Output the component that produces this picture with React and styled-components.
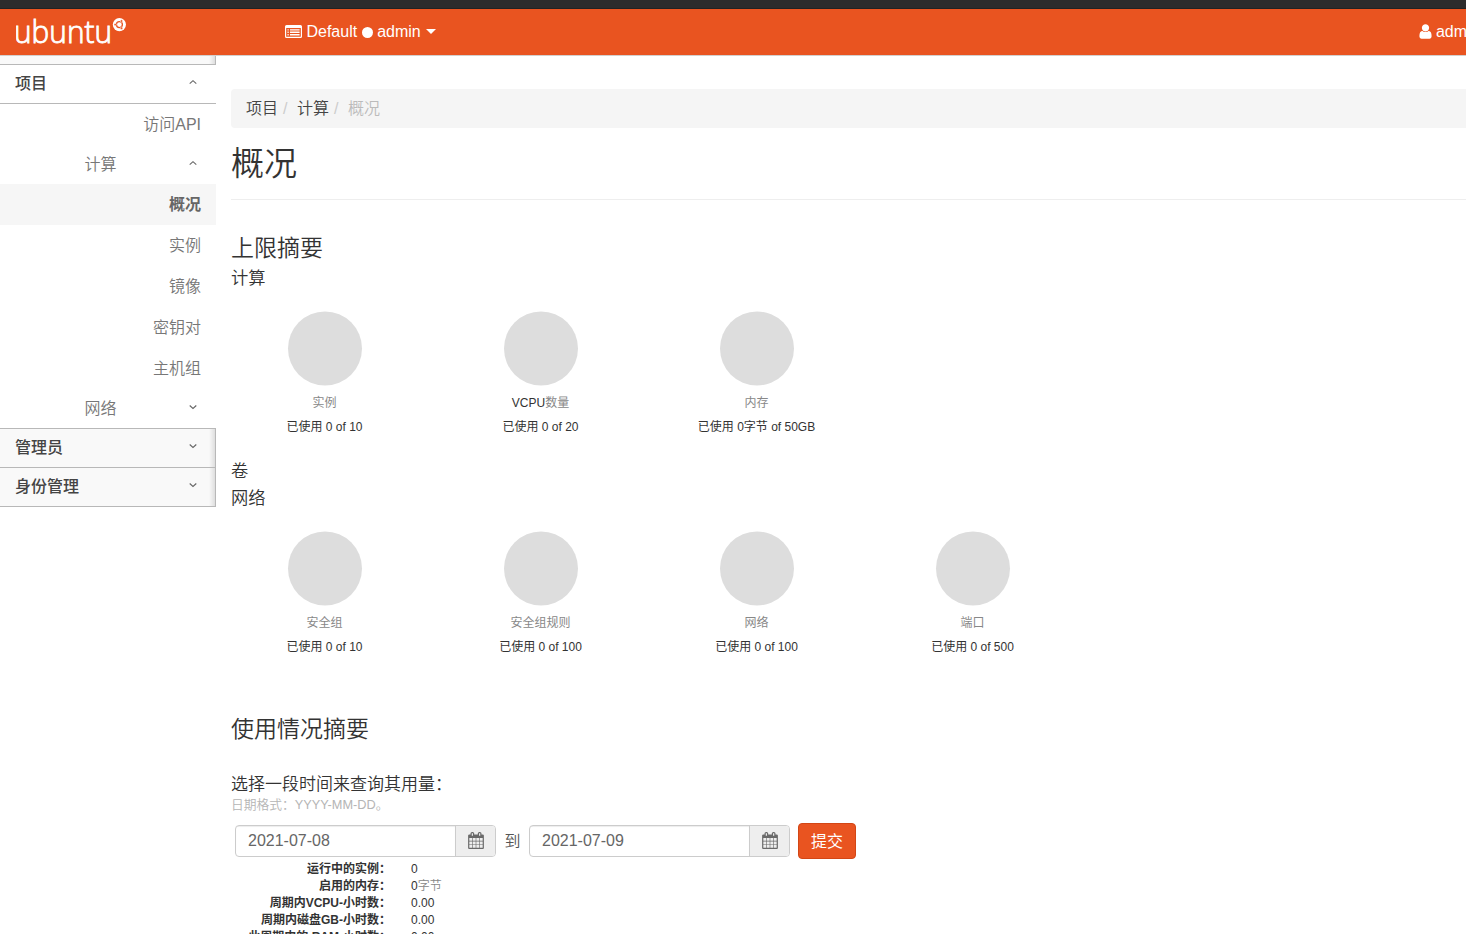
import React from 'react';
import styled, { createGlobalStyle } from 'styled-components';

const GlobalStyle = createGlobalStyle`
  * { box-sizing: border-box; }
  html, body { margin: 0; height: 100%; overflow: hidden; background: #fff; }
  body {
    font-family: "Liberation Sans", "Noto Sans CJK SC", sans-serif;
    font-size: 16px;
    font-weight: 350;
    color: #333;
  }
  h1, h2, h3, h4, p, dl, dd, dt, ul, ol { margin: 0; padding: 0; font-weight: 350; }
`;

const Page = styled.div`
  height: 934px;
  overflow: hidden;
`;

const WindowEdge = styled.div`
  height: 9px;
  background: #2c2c2c;
  border-bottom: 1px solid #222;
`;

const Navbar = styled.header`
  display: flex;
  align-items: center;
  height: 47px;
  padding-left: 16px;
  background: #e95420;
  border-bottom: 1px solid #d3cfcd;
  color: #fff;
  white-space: nowrap;
`;

const Brand = styled.a`
  display: flex;
  width: 269px;
  height: 46px;
`;

const NavItem = styled.a`
  display: flex;
  align-items: center;
  height: 46px;
  padding-bottom: 1px;
  line-height: 20px;
`;

const UserItem = styled(NavItem)`
  margin-left: auto;
  margin-right: -13.5px;
  gap: 4px;
`;

const Dot = styled.span`
  width: 11px;
  height: 11px;
  margin: 2px 4px 0 5px;
  border-radius: 50%;
  background: #fff;
`;

const Caret = styled.span`
  margin-left: 5px;
  border: 5px solid transparent;
  border-top-color: #fff;
  border-bottom-width: 0;
`;

const Body = styled.div`
  display: flex;
  height: 878px;
`;

const Sidebar = styled.nav`
  flex: 0 0 216px;
  color: #777;
`;

const SidebarCap = styled.div`
  height: 9px;
  background: linear-gradient(to left, #dedede, #f9f9f9 6px);
  border: solid #b8b8b8;
  border-width: 0 1px 1px 0;
`;

const Panel = styled.a`
  display: flex;
  align-items: center;
  justify-content: space-between;
  height: 39px;
  padding: 0 18px 4px 15px;
  border-bottom: 1px solid #b8b8b8;
  font-weight: 500;
  color: #444;
  ${(p) => !p.$open && `
    background: linear-gradient(to left, #dedede, #f9f9f9 6px);
    border-right: 1px solid #b8b8b8;
    padding-right: 17px;
  `}
`;

const Group = styled.a`
  display: flex;
  align-items: center;
  justify-content: space-between;
  height: 39px;
  padding: 0 18px 3px 84.5px;
`;

const Leaf = styled.a`
  display: flex;
  align-items: center;
  justify-content: flex-end;
  height: 41px;
  padding: 0 15px 3px 0;
  ${(p) => p.$active && 'background: #f6f6f6; font-weight: 700; color: #666;'}
`;

const SubTree = styled.div`
  border-bottom: 1px solid #b8b8b8;
  height: 325px;
`;

const Main = styled.main`
  flex: 1;
  min-width: 0;
  padding: 33px 0 0 15px;
`;

const Breadcrumb = styled.ol`
  display: flex;
  align-items: center;
  height: 39px;
  padding: 0 0 3px 15px;
  background: #f5f5f5;
  border-radius: 4px 0 0 4px;
  list-style: none;
`;

const Crumb = styled.li`
  color: ${(p) => (p.$current ? '#bbb' : '#444')};
  li + &::before {
    content: "/";
    padding: 0 9.5px 0 5px;
    color: #ccc;
  }
`;

const Title = styled.h1`
  height: 72px;
  padding-top: 1px;
  line-height: 70px;
  border-bottom: 1px solid #eee;
  font-size: 33px;
`;

const SectionTitle = styled.h2`
  margin-top: ${(p) => p.$top}px;
  font-size: 23px;
  line-height: 28px;
`;

const SubTitle = styled.h3`
  margin-top: ${(p) => p.$top || 0}px;
  font-size: 17.25px;
  line-height: 27px;
`;

const FormTitle = styled(SubTitle)`
  font-size: 17px;
`;

const Quotas = styled.div`
  display: flex;
  height: ${(p) => p.$height}px;
  margin-left: -15px;
  padding-top: 19px;
`;

const Quota = styled.div`
  flex: 0 0 216px;
  display: flex;
  flex-direction: column;
  align-items: center;
  padding-left: 1px;
  font-size: 12px;
  font-weight: 400;
  line-height: 24px;
`;

const Pie = styled.svg`
  width: 76px;
  height: 76px;
  margin-bottom: 3.5px;
  fill: #ddd;
`;

const Muted = styled.span`
  color: #888;
`;

const Hint = styled.p`
  font-size: 12.75px;
  line-height: 14px;
  color: #b5b5b5;
`;

const Form = styled.form`
  display: flex;
  align-items: center;
  height: 36px;
  margin: 11px 0 2px;
  padding-left: 4px;
`;

const DateField = styled.div`
  display: flex;
  width: 261px;
  height: 32px;
  border: 1px solid #ccc;
  border-radius: 4px;
  overflow: hidden;
  color: #666;
`;

const DateValue = styled.span`
  flex: 1;
  padding-left: 12px;
  line-height: 30px;
  box-shadow: inset 0 1px 1px rgba(0, 0, 0, 0.075);
`;

const Addon = styled.span`
  display: flex;
  align-items: center;
  justify-content: center;
  width: 40px;
  padding: 0 0 1px;
  background: #eee;
  border-left: 1px solid #ccc;
`;

const To = styled.span`
  width: 33px;
  padding-bottom: 3px;
  text-align: center;
  color: #555;
`;

const Submit = styled.button`
  width: 58px;
  height: 36px;
  margin-left: 8px;
  padding: 0 0 3px;
  border: 1px solid #d34615;
  border-radius: 4px;
  background: #e95420;
  color: #fff;
  font: inherit;
  font-weight: 400;
`;

const Stats = styled.dl`
  display: grid;
  grid-template-columns: 160px 1fr;
  column-gap: 20px;
  font-size: 12px;
  line-height: 17px;
  grid-auto-rows: 17px;
`;

const Term = styled.dt`
  && { font-weight: 700; }
  text-align: right;
  white-space: nowrap;
`;

const Logo = () => (
  <svg width="114" height="46" viewBox="0 0 114 46">
    <text x="-2" y="33.8" fontSize="32" fontWeight="300" fontFamily="'Open Sans', 'Noto Sans', sans-serif" fill="#fff" stroke="#fff" strokeWidth="0.9" textLength="98" lengthAdjust="spacingAndGlyphs">ubuntu</text>
    <circle cx="103.4" cy="15.6" r="6.6" fill="#fff" />
    <circle cx="103.4" cy="15.6" r="3" fill="none" stroke="#e95420" strokeWidth="1.3" />
    <g fill="#e95420" stroke="#fff" strokeWidth="0.5">
      <circle cx="99.2" cy="15.6" r="1.2" />
      <circle cx="105.5" cy="12" r="1.2" />
      <circle cx="105.5" cy="19.2" r="1.2" />
    </g>
  </svg>
);

const ListIcon = () => (
  <svg width="17" height="14" viewBox="0 0 17 14" fill="#fff" fillRule="evenodd">
    <path d="M1.500 0h14a1.500 1.500 0 0 1 1.500 1.500v10a1.500 1.500 0 0 1-1.500 1.500h-14A1.500 1.500 0 0 1 0 11.500v-10A1.500 1.500 0 0 1 1.500 0zM1.200 3.100v8.300q0 .4.4.4h13.800q.4 0 .4-.4V3.100z" />
    <path d="M2.500 4.200h1.200v1.300H2.500zM2.500 6.600h1.200v1.300H2.500zM2.500 9.100h1.200v1.300H2.500zM5 4.200h9.600v1.300H5zM5 6.600h9.600v1.300H5zM5 9.100h9.600v1.300H5z" />
  </svg>
);

const UserIcon = () => (
  <svg width="13" height="17" viewBox="0 0 1280 1792" fill="#fff">
    <path d="M1280 1399q0 109-62.5 187t-150.5 78h-854q-88 0-150.5-78t-62.5-187q0-85 8.5-160.5t31.5-152 58.500-131 94-89 134.500-34.500q131 128 313 128t313-128q76 0 134.500 34.500t94 89 58.500 131 31.500 152 8.500 160.500zm-256-887q0 159-112.500 271.500t-271.500 112.500-271.500-112.500-112.500-271.500 112.500-271.500 271.500-112.500 271.500 112.500 112.500 271.500z" />
  </svg>
);

const CalendarIcon = () => (
  <svg width="16" height="17" viewBox="0 0 1664 1792" fill="#6a6a6a">
    <path d="M128 1664h288v-288h-288v288zm352 0h320v-288h-320v288zm-352-352h288v-320h-288v320zm352 0h320v-320h-320v320zm-352-384h288v-288h-288v288zm736 736h320v-288h-320v288zm-384-736h320v-288h-320v288zm768 736h288v-288h-288v288zm-384-352h320v-320h-320v320zm-352-864v-288q0-13-9.500-22.500t-22.500-9.500h-64q-13 0-22.500 9.500t-9.500 22.500v288q0 13 9.500 22.500t22.500 9.500h64q13 0 22.500-9.500t9.500-22.500zm736 864h288v-320h-288v320zm-384-384h320v-288h-320v288zm384 0h288v-288h-288v288zm32-480v-288q0-13-9.500-22.500t-22.500-9.500h-64q-13 0-22.500 9.500t-9.500 22.500v288q0 13 9.500 22.500t22.500 9.500h64q13 0 22.500-9.500t9.500-22.500zm384-64v1280q0 52-38 90t-90 38h-1408q-52 0-90-38t-38-90v-1280q0-52 38-90t90-38h128v-96q0-66 47-113t113-47h64q66 0 113 47t47 113v96h384v-96q0-66 47-113t113-47h64q66 0 113 47t47 113v96h128q52 0 90 38t38 90z" />
    <path d="M128 384h1408v230H128z" />
  </svg>
);

const Chevron = ({ up }) => (
  <svg width="10" height="10" viewBox="0 0 10 10" fill="none" stroke="#666" strokeWidth="1.1">
    <path d={up ? 'M1.700 6.700L5 3.700L8.300 6.700' : 'M1.700 3.500L5 6.500L8.300 3.500'} />
  </svg>
);

const compute = [
  { name: '实例', used: '已使用 0 of 10' },
  { prefix: 'VCPU', name: '数量', used: '已使用 0 of 20' },
  { name: '内存', used: '已使用 0字节 of 50GB' },
];

const network = [
  { name: '安全组', used: '已使用 0 of 10' },
  { name: '安全组规则', used: '已使用 0 of 100' },
  { name: '网络', used: '已使用 0 of 100' },
  { name: '端口', used: '已使用 0 of 500' },
];

const stats = [
  ['运行中的实例：', '0'],
  ['启用的内存：', '0', '字节'],
  ['周期内VCPU-小时数：', '0.00'],
  ['周期内磁盘GB-小时数：', '0.00'],
  ['此周期内的 RAM-小时数：', '0.00'],
];

const QuotaRow = ({ items, height }) => (
  <Quotas $height={height}>
    {items.map((q) => (
      <Quota key={q.name}>
        <Pie viewBox="0 0 76 76"><circle cx="38" cy="37.5" r="37" /></Pie>
        <span>{q.prefix}<Muted>{q.name}</Muted></span>
        <span>{q.used}</span>
      </Quota>
    ))}
  </Quotas>
);

const DateInput = ({ value }) => (
  <DateField>
    <DateValue>{value}</DateValue>
    <Addon><CalendarIcon /></Addon>
  </DateField>
);

export default function App() {
  return (
    <Page>
      <GlobalStyle />
      <WindowEdge />
      <Navbar>
        <Brand><Logo /></Brand>
        <NavItem>
          <ListIcon />
          <span>&nbsp;Default</span>
          <Dot />
          <span>admin</span>
          <Caret />
        </NavItem>
        <UserItem><UserIcon /><span>admin</span></UserItem>
      </Navbar>
      <Body>
        <Sidebar>
          <SidebarCap />
          <Panel $open>项目<Chevron up /></Panel>
          <SubTree>
            <Leaf>访问API</Leaf>
            <Group>计算<Chevron up /></Group>
            <Leaf $active>概况</Leaf>
            <Leaf>实例</Leaf>
            <Leaf>镜像</Leaf>
            <Leaf>密钥对</Leaf>
            <Leaf>主机组</Leaf>
            <Group>网络<Chevron /></Group>
          </SubTree>
          <Panel>管理员<Chevron /></Panel>
          <Panel>身份管理<Chevron /></Panel>
        </Sidebar>
        <Main>
          <Breadcrumb>
            <Crumb>项目</Crumb>
            <Crumb>计算</Crumb>
            <Crumb $current>概况</Crumb>
          </Breadcrumb>
          <Title>概况</Title>
          <SectionTitle $top={34}>上限摘要</SectionTitle>
          <SubTitle $top={3}>计算</SubTitle>
          <QuotaRow items={compute} height={166} />
          <SubTitle>卷</SubTitle>
          <SubTitle>网络</SubTitle>
          <QuotaRow items={network} height={168} />
          <SectionTitle $top={35}>使用情况摘要</SectionTitle>
          <FormTitle $top={28}>选择一段时间来查询其用量：</FormTitle>
          <Hint>日期格式：YYYY-MM-DD。</Hint>
          <Form>
            <DateInput value="2021-07-08" />
            <To>到</To>
            <DateInput value="2021-07-09" />
            <Submit type="button">提交</Submit>
          </Form>
          <Stats>
            {stats.map(([label, value, unit]) => (
              <React.Fragment key={label}>
                <Term>{label}</Term>
                <dd>{value}{unit && <Muted>{unit}</Muted>}</dd>
              </React.Fragment>
            ))}
          </Stats>
        </Main>
      </Body>
    </Page>
  );
}
